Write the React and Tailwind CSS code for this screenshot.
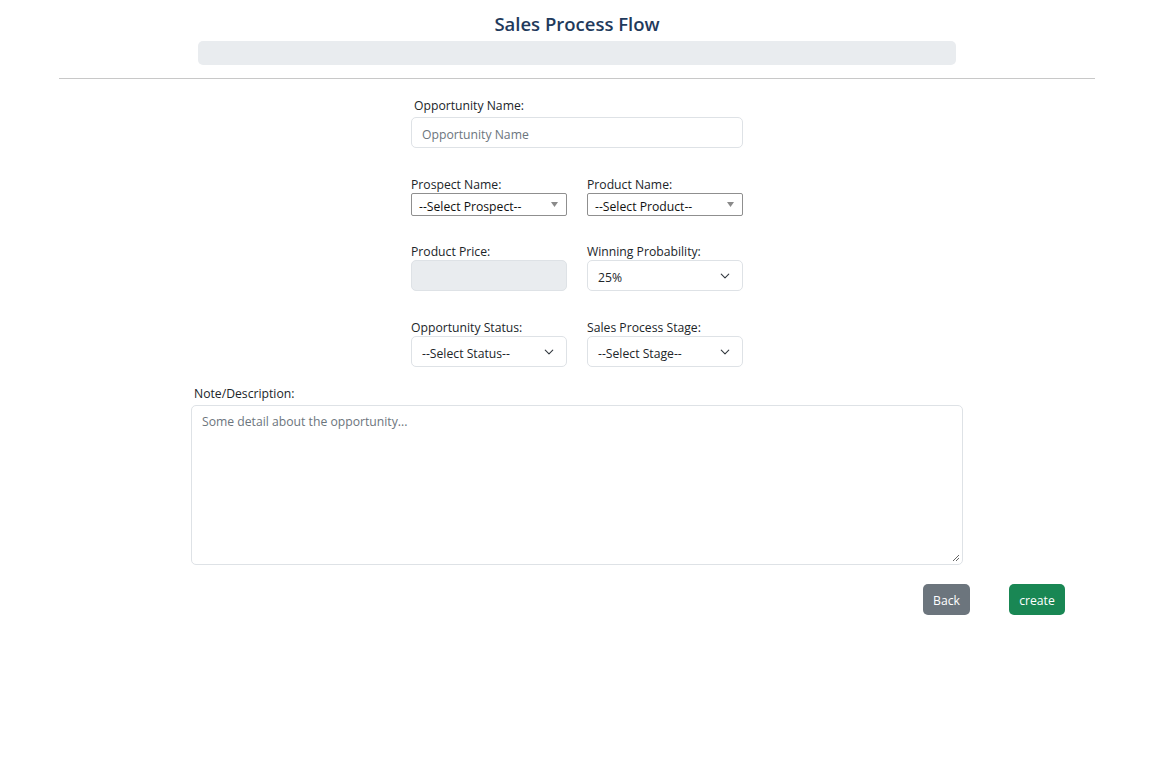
import React from 'react';

const font = { fontFamily: '"Open Sans", "Noto Sans", sans-serif' };

const Chevron = () => (
  <svg width="10" height="10" viewBox="0 0 16 16" className="shrink-0">
    <path d="M2 5l6 6 6-6" fill="none" stroke="#343a40" strokeWidth="1.8" strokeLinecap="round" strokeLinejoin="round" />
  </svg>
);

const Caret = () => (
  <svg width="7" height="5" viewBox="0 0 7 5" className="shrink-0">
    <path d="M0 0h7L3.5 5z" fill="#8a8a8a" />
  </svg>
);

const Label = ({ children, className = '' }) => (
  <div className={`text-[12.2px] text-[#212529] leading-[17px] ${className}`}>{children}</div>
);

const NativeSelect = ({ text }) => (
  <div className="w-[156px] h-[23px] border border-[#8f8f8f] rounded-[2px] flex items-center justify-between pl-[7px] pr-[8px] text-[12.2px] text-[#111]">
    <span className="pt-[4px] leading-[15px]">{text}</span>
    <Caret />
  </div>
);

const FormSelect = ({ text }) => (
  <div className="w-[156px] h-[31px] border border-[#dee2e6] rounded-[5px] flex items-center justify-between pl-[10px] pr-[12px] text-[12.2px] text-[#212529]">
    <span className="pt-[4px] leading-[15px]">{text}</span>
    <Chevron />
  </div>
);

export default function App() {
  return (
    <div className="min-h-screen bg-white" style={font}>
      <div className="ml-[59px] w-[1036px]">
        <div className="flex flex-col items-center pt-[11px]">
          <h1 className="text-[18.5px] font-semibold text-[#1f3a5c] leading-[26px]">Sales Process Flow</h1>
          <div className="mt-[4px] w-[758px] h-[24px] bg-[#e9ecef] rounded-[5px]" />
        </div>
        <div className="mt-[13px] border-t border-[#c8c8c8]" />

        <div className="flex flex-col items-center">
          <div className="w-[332px] mt-[18px]">
            <Label className="pl-[3px]">Opportunity Name:</Label>
            <div className="mt-[3px] h-[31px] border border-[#dee2e6] rounded-[5px] flex items-center px-[10px] text-[12.2px] text-[#6c757d]">
              <span className="pt-[4px] leading-[15px]">Opportunity Name</span>
            </div>

            <div className="mt-[28px] flex gap-[20px]">
              <div>
                <Label>Prospect Name:</Label>
                <NativeSelect text="--Select Prospect--" />
              </div>
              <div>
                <Label>Product Name:</Label>
                <NativeSelect text="--Select Product--" />
              </div>
            </div>

            <div className="mt-[27px] flex gap-[20px]">
              <div>
                <Label>Product Price:</Label>
                <div className="w-[156px] h-[31px] bg-[#e9ecef] border border-[#dee2e6] rounded-[5px]" />
              </div>
              <div>
                <Label>Winning Probability:</Label>
                <FormSelect text="25%" />
              </div>
            </div>

            <div className="mt-[28px] flex gap-[20px]">
              <div>
                <Label>Opportunity Status:</Label>
                <FormSelect text="--Select Status--" />
              </div>
              <div>
                <Label>Sales Process Stage:</Label>
                <FormSelect text="--Select Stage--" />
              </div>
            </div>
          </div>

          <div className="w-[772px] mt-[18px]">
            <Label className="pl-[3px]">Note/Description:</Label>
            <div className="mt-[3px] h-[160px] border border-[#dee2e6] rounded-[5px] px-[10px] pt-[7px] text-[12.2px] text-[#6c757d] relative">
              Some detail about the opportunity...
              <svg width="8" height="8" viewBox="0 0 8 8" className="absolute right-[2px] bottom-[2px]">
                <path d="M7 1L1 7M7 4L4 7" stroke="#666" strokeWidth="1" />
              </svg>
            </div>
          </div>

          <div className="w-[1036px] mt-[19px] flex justify-end gap-[39px] pr-[30px]">
            <button className="w-[47px] h-[31px] pt-[3px] bg-[#6c757d] text-white text-[12.2px] rounded-[5px]">Back</button>
            <button className="w-[56px] h-[31px] pt-[3px] bg-[#198754] text-white text-[12.2px] rounded-[5px]">create</button>
          </div>
        </div>
      </div>
    </div>
  );
}
